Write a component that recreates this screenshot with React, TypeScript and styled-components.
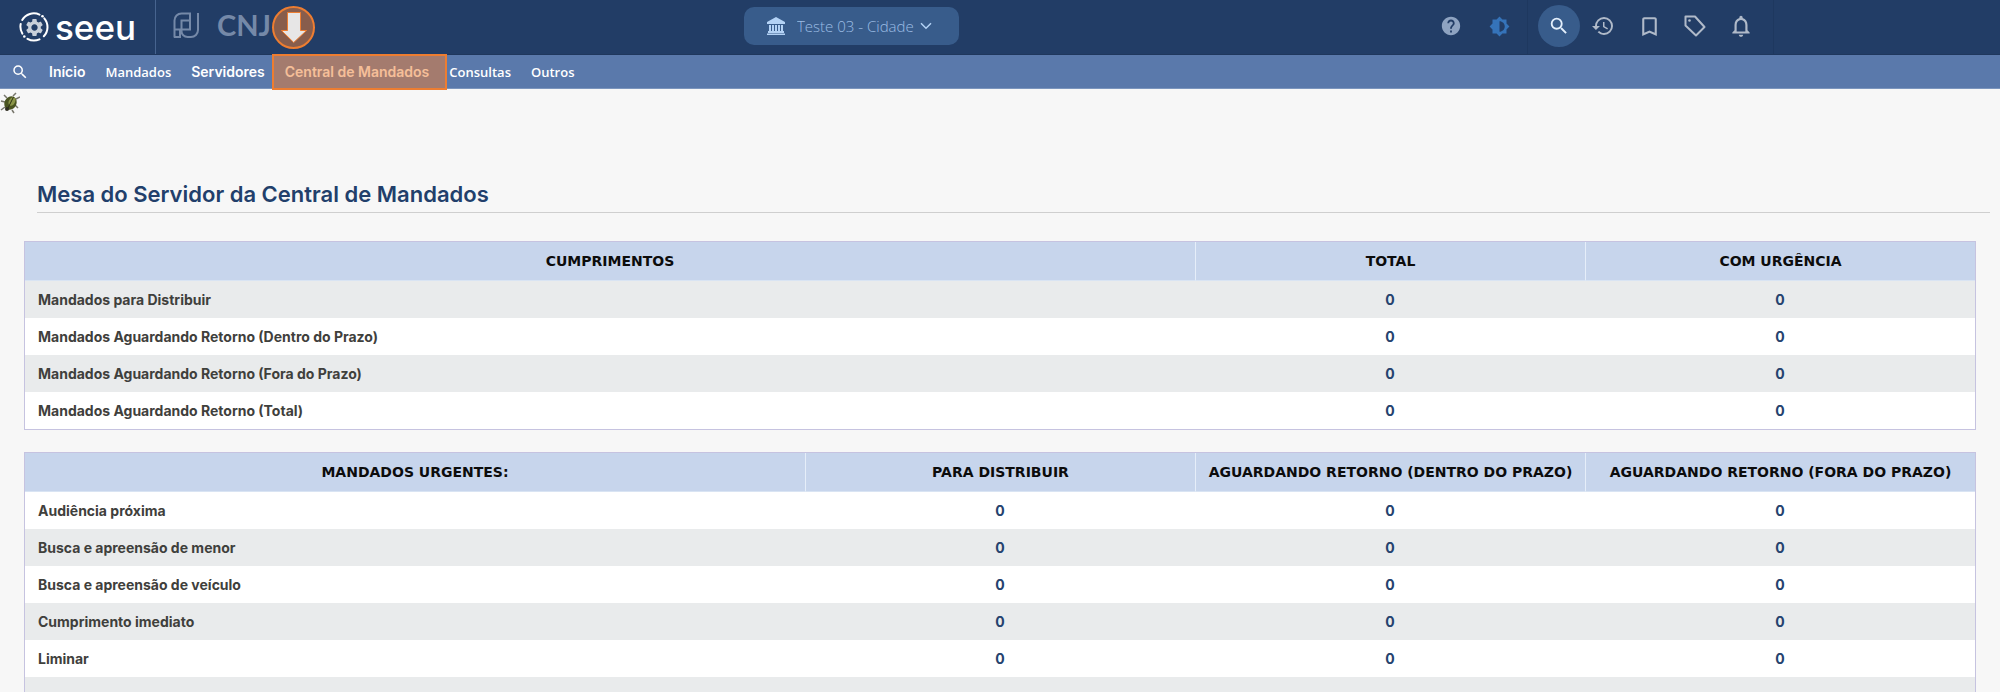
import React from "react";
import styled, { createGlobalStyle } from "styled-components";
import {
  MdBookmarkBorder,
  MdBrightness6,
  MdHelp,
  MdHistory,
  MdNotificationsNone,
  MdSearch,
  MdSettings,
} from "react-icons/md";

const GlobalStyle = createGlobalStyle`
  * { box-sizing: border-box; }
  body {
    margin: 0;
    background: #f7f7f7;
    font-family: Inter, "Liberation Sans", sans-serif;
  }
`;

const Shell = styled.div`
  display: flex;
  flex-direction: column;
  height: 100vh;
  overflow: hidden;
`;

const TopBar = styled.header`
  display: grid;
  grid-template-columns: 744fr auto 1041fr;
  height: 55px;
  flex: none;
  background: #223d66;
  border-bottom: 1px solid #1f375c;
`;

const Logos = styled.div`
  display: flex;
  align-items: stretch;
`;

const Brand = styled.a`
  display: flex;
  align-items: center;
  gap: 5px;
  width: 156px;
  padding-left: 18px;
  border-right: 1px solid #47648f;
  color: #fff;
  font-size: 35px;
  line-height: 48px;
  font-weight: 500;
  text-decoration: none;
`;

const BrandMark = styled.span`
  display: grid;
  flex: none;
  color: #c9d0da;
  > * { grid-area: 1 / 1; place-self: center; }
`;

const Partners = styled.div`
  display: flex;
  align-items: center;
  gap: 17px;
  padding: 0 0 4px 17px;
  color: #7589a8;
`;

const PartnerName = styled.span`
  font-family: Lato, "Liberation Sans", sans-serif;
  font-size: 29px;
  line-height: 36px;
  font-weight: 700;
`;

const UnitPicker = styled.label`
  display: flex;
  align-items: center;
  align-self: center;
  width: 215px;
  height: 38px;
  margin-bottom: 3px;
  padding: 0 27px 0 21px;
  border-radius: 10px;
  background: #385c8b;
  color: #b3d2f5;
  svg { flex: none; }
`;

const UnitSelect = styled.select`
  appearance: none;
  flex: 1;
  min-width: 0;
  margin-left: 10px;
  padding: 0;
  border: 0;
  background: transparent;
  color: #9cbce4;
  font: 300 15px/20px "Open Sans", "Noto Sans", sans-serif;
`;

const Tools = styled.div`
  display: flex;
  align-items: stretch;
  justify-content: flex-end;
  padding-right: 21.7%;
`;

const ToolGroup = styled.div`
  display: flex;
  align-items: center;
  padding: 0 9px 2px 10px;
  border-right: 1px solid #1e385f;
  &:first-child {
    gap: 2px;
    padding-right: 5px;
  }
`;

const ToolButton = styled.button<{ $color?: string; $active?: boolean }>`
  display: grid;
  place-items: center;
  width: ${(p) => (p.$active ? 42 : 46)}px;
  height: 42px;
  padding: 0;
  border: 0;
  border-radius: 50%;
  background: ${(p) => (p.$active ? "#385c8b" : "transparent")};
  color: ${(p) => p.$color ?? "#b0bac9"};
`;

const MenuBar = styled.nav`
  display: flex;
  align-items: center;
  height: 34px;
  flex: none;
  padding-left: 11px;
  background: #5a79ab;
  border-bottom: 1px solid #7b95bd;
`;

const SearchButton = styled.button`
  display: grid;
  place-items: center;
  width: 18px;
  height: 34px;
  margin-right: 10px;
  padding: 0;
  border: 0;
  background: transparent;
  color: #fff;
`;

const MenuLink = styled.a<{ $humanist?: boolean }>`
  padding: 0 10px;
  color: #fff;
  font-family: ${(p) => (p.$humanist ? '"Open Sans", "Noto Sans"' : 'Inter, "Liberation Sans"')}, sans-serif;
  font-size: ${(p) => (p.$humanist ? 13 : 14)}px;
  line-height: 34px;
  font-weight: 600;
  text-decoration: none;
`;

const CurrentLink = styled(MenuLink)`
  position: relative;
  padding: 0 18px 0 13px;
  margin-right: -8px;
  margin-left: -3px;
  &::after {
    content: "";
    position: absolute;
    inset: -1px 0;
    border: 2px solid #ed7d31;
    background: rgba(237, 125, 49, 0.5);
  }
`;

const Pointer = styled.svg`
  position: absolute;
  left: 0;
  bottom: calc(100% + 6px);
`;

const Page = styled.main`
  flex: 1;
  min-height: 0;
  overflow: hidden;
`;

const Bug = styled.svg`
  display: block;
  margin-top: 3px;
`;

const Title = styled.h1`
  margin: 66px 10px 28px 37px;
  padding-bottom: 4px;
  border-bottom: 1px solid #cfcfcf;
  color: #223f6b;
  font-size: 22px;
  line-height: 28px;
  font-weight: 600;
`;

const Table = styled.table<{ $shade: "odd" | "even" }>`
  width: calc(100% - 48px);
  margin: 0 24px 22px;
  border: 1px solid #c6c3e0;
  border-spacing: 0;
  table-layout: fixed;
  background: #fff;
  tbody tr:nth-child(${(p) => p.$shade}) { background: #e9ebec; }
`;

const HeadCell = styled.th<{ $width: number }>`
  width: ${(p) => p.$width}%;
  height: 39px;
  padding: 0;
  border-bottom: 1px solid #d9e4f3;
  background: #c7d5ec;
  color: #0c0c0c;
  font: 700 14px/18px Verdana, "DejaVu Sans", sans-serif;
  white-space: nowrap;
  & + & { border-left: 1px solid #e6eef9; }
`;

const NameCell = styled.th`
  height: 37px;
  padding: 0 13px;
  color: #3f403c;
  font-size: 14px;
  line-height: 18px;
  font-weight: 700;
  text-align: left;
`;

const CountCell = styled.td`
  padding: 0;
  color: #24426e;
  font-size: 14px;
  line-height: 18px;
  font-weight: 700;
  text-align: center;
`;

interface Column { label: string; width: number }

function CountTable({ columns, rows, shade }: { columns: Column[]; rows: string[]; shade: "odd" | "even" }) {
  return (
    <Table $shade={shade}>
      <thead>
        <tr>
          {columns.map((c) => (
            <HeadCell key={c.label} $width={c.width} scope="col">{c.label}</HeadCell>
          ))}
        </tr>
      </thead>
      <tbody>
        {rows.map((name, i) => (
          <tr key={i}>
            <NameCell scope="row">{name}</NameCell>
            {columns.slice(1).map((c) => (
              <CountCell key={c.label}>{name && "0"}</CountCell>
            ))}
          </tr>
        ))}
      </tbody>
    </Table>
  );
}

const doneColumns: Column[] = [
  { label: "CUMPRIMENTOS", width: 60 },
  { label: "TOTAL", width: 20 },
  { label: "COM URGÊNCIA", width: 20 },
];
const doneRows = [
  "Mandados para Distribuir",
  "Mandados Aguardando Retorno (Dentro do Prazo)",
  "Mandados Aguardando Retorno (Fora do Prazo)",
  "Mandados Aguardando Retorno (Total)",
];
const urgentColumns: Column[] = [
  { label: "MANDADOS URGENTES:", width: 40 },
  { label: "PARA DISTRIBUIR", width: 20 },
  { label: "AGUARDANDO RETORNO (DENTRO DO PRAZO)", width: 20 },
  { label: "AGUARDANDO RETORNO (FORA DO PRAZO)", width: 20 },
];
const urgentRows = [
  "Audiência próxima",
  "Busca e apreensão de menor",
  "Busca e apreensão de veículo",
  "Cumprimento imediato",
  "Liminar",
  "",
];

export default function App() {
  return (
    <Shell>
      <GlobalStyle />
      <TopBar>
        <Logos>
          <Brand href="#">
            <BrandMark>
              <svg width="32" height="32" viewBox="0 0 32 32" fill="none" stroke="#fff" strokeWidth="2" strokeLinecap="round">
                <path d="M4.200 9A13.500 13.500 0 0 1 21.500 3.600M26.300 7.300A13.500 13.500 0 0 1 25.800 25.300" />
                <path d="M2.700 13A13.500 13.500 0 0 0 4.300 22.600M9.500 27.800A13.500 13.500 0 0 0 21.500 28.300" />
                <circle cx="24.500" cy="5.200" r="1.300" fill="#fff" stroke="none" />
                <circle cx="6.300" cy="25.500" r="1.300" fill="#fff" stroke="none" />
              </svg>
              <MdSettings size={21} />
            </BrandMark>
            seeu
          </Brand>
          <Partners>
            <svg width="27" height="27" viewBox="0 0 27 27" fill="none" stroke="currentColor" strokeWidth="2">
              <path d="M1.500 25.500V8.500a7 7 0 0 1 7-7H17v7H8.500V19a6 6 0 0 0 6 6H18a7 7 0 0 0 7-7V1" />
              <path d="M1.500 17.500H17v-9M1 25h6v-7.500" />
            </svg>
            <PartnerName>CNJ</PartnerName>
          </Partners>
        </Logos>
        <UnitPicker>
          <svg width="22" height="20" viewBox="0 0 22 20" fill="currentColor">
            <path d="M11 1 20 6v2H2V6ZM4 9h2v7H4ZM7 9h2v7H7ZM10 9h2v7h-2ZM13 9h2v7h-2ZM16 9h2v7h-2ZM3 15h16v2H3ZM2 17.500h18V19H2Z" />
          </svg>
          <UnitSelect aria-label="Unidade">
            <option>Teste 03 - Cidade</option>
          </UnitSelect>
          <svg width="12" height="8" viewBox="0 0 12 8" fill="none" stroke="currentColor" strokeWidth="1.500">
            <path d="M1 1.200 6 6.200l5-5" />
          </svg>
        </UnitPicker>
        <Tools>
          <ToolGroup>
            <ToolButton aria-label="Ajuda" $color="#8ea3c1"><MdHelp size={22} /></ToolButton>
            <ToolButton aria-label="Contraste" $color="#3573b9"><MdBrightness6 size={21} /></ToolButton>
          </ToolGroup>
          <ToolGroup>
            <ToolButton aria-label="Pesquisar" $color="#e3effc" $active><MdSearch size={22} /></ToolButton>
            <ToolButton aria-label="Histórico"><MdHistory size={24} /></ToolButton>
            <ToolButton aria-label="Favoritos"><MdBookmarkBorder size={25} /></ToolButton>
            <ToolButton aria-label="Etiquetas">
              <svg width="22" height="22" viewBox="0 0 22 22" fill="none" stroke="currentColor" strokeWidth="2" strokeLinejoin="round">
                <path d="M1.500 1.500H11L20.500 12 12 20.500 1.500 10.500Z" />
                <circle cx="5.500" cy="5.500" r="1.300" fill="currentColor" stroke="none" />
              </svg>
            </ToolButton>
            <ToolButton aria-label="Notificações"><MdNotificationsNone size={26} /></ToolButton>
          </ToolGroup>
        </Tools>
      </TopBar>
      <MenuBar>
        <SearchButton aria-label="Buscar no menu"><MdSearch size={18} /></SearchButton>
        <MenuLink href="#">Início</MenuLink>
        <MenuLink href="#" $humanist>Mandados</MenuLink>
        <MenuLink href="#">Servidores</MenuLink>
        <CurrentLink href="#">
          Central de Mandados
          <Pointer width="43" height="43" viewBox="0 0 43 43" stroke="#ed7d31">
            <circle cx="21.500" cy="21.500" r="20.500" fill="#ed7d31" fillOpacity="0.5" strokeWidth="2" />
            <path d="M15.500 6.500h13v18h6L21.700 36.500 9.500 24.500h6Z" fill="#e7e6e6" strokeWidth="1" />
          </Pointer>
        </CurrentLink>
        <MenuLink href="#" $humanist>Consultas</MenuLink>
        <MenuLink href="#" $humanist>Outros</MenuLink>
      </MenuBar>
      <Page>
        <Bug width="20" height="22" viewBox="0 0 20 22">
          <path d="M7 6 4 3M13 4l3-3M16 7l4-2M5 10 1 9M5 15l-4 3M15 13l3 3M12 18l2 3" stroke="#77766c" strokeWidth="1.500" fill="none" />
          <ellipse cx="10.500" cy="11" rx="6" ry="7" transform="rotate(28 10.500 11)" fill="#4a5420" />
          <ellipse cx="12" cy="9.500" rx="3" ry="4.500" transform="rotate(28 12 9.500)" fill="#8b9648" />
          <path d="M13.500 5 7.500 17" stroke="#2b3012" />
          <circle cx="7" cy="17" r="2" fill="#2e2c20" />
        </Bug>
        <Title>Mesa do Servidor da Central de Mandados</Title>
        <CountTable columns={doneColumns} rows={doneRows} shade="odd" />
        <CountTable columns={urgentColumns} rows={urgentRows} shade="even" />
      </Page>
    </Shell>
  );
}
